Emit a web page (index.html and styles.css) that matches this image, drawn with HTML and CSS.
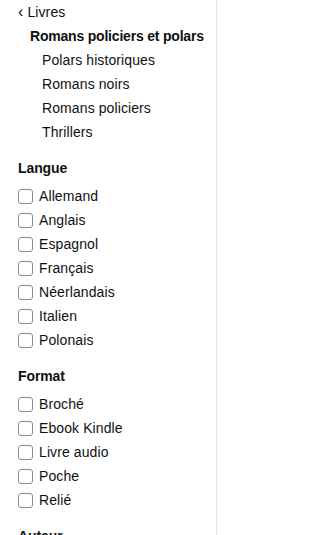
FILE: index.html
```html
<!DOCTYPE html>
<html lang="fr">
<head>
<meta charset="utf-8">
<link rel="stylesheet" href="styles.css">
</head>
<body>
<div class="sidebar">
  <ul class="cats">
    <li class="back"><span class="chev">&lsaquo;</span> Livres</li>
    <li class="current">Romans policiers et polars</li>
    <li class="sub">Polars historiques</li>
    <li class="sub">Romans noirs</li>
    <li class="sub">Romans policiers</li>
    <li class="sub">Thrillers</li>
  </ul>
  <div class="group">
    <div class="heading">Langue</div>
    <ul class="checks">
      <li><span class="box"></span>Allemand</li>
      <li><span class="box"></span>Anglais</li>
      <li><span class="box"></span>Espagnol</li>
      <li><span class="box"></span>Français</li>
      <li><span class="box"></span>Néerlandais</li>
      <li><span class="box"></span>Italien</li>
      <li><span class="box"></span>Polonais</li>
    </ul>
  </div>
  <div class="group">
    <div class="heading">Format</div>
    <ul class="checks">
      <li><span class="box"></span>Broché</li>
      <li><span class="box"></span>Ebook Kindle</li>
      <li><span class="box"></span>Livre audio</li>
      <li><span class="box"></span>Poche</li>
      <li><span class="box"></span>Relié</li>
    </ul>
  </div>
  <div class="group">
    <div class="heading">Auteur</div>
  </div>
</div>
</body>
</html>
```

FILE: styles.css
```css
html, body {
  margin: 0;
  padding: 0;
  background: #fff;
}
body {
  font-family: "Liberation Sans", Arial, sans-serif;
  font-size: 14px;
  color: #0f1111;
  letter-spacing: 0.1px;
}
.sidebar {
  width: 198px;
  height: 535px;
  padding-left: 18px;
  border-right: 1px solid #e3e3e3;
  overflow: hidden;
}
ul {
  list-style: none;
  margin: 0;
  padding: 0;
}
li {
  line-height: 24px;
  white-space: nowrap;
}
.chev {
  font-size: 16px;
}
.current {
  font-weight: bold;
  letter-spacing: -0.2px;
  padding-left: 12px;
}
.sub {
  padding-left: 24px;
}
.group {
  margin-top: 12px;
}
.heading {
  font-weight: bold;
  letter-spacing: -0.1px;
  line-height: 24px;
  margin-bottom: 4px;
}
.checks li {
  display: flex;
  align-items: center;
}
.box {
  box-sizing: border-box;
  width: 15px;
  height: 15px;
  border: 1px solid #888c8c;
  border-radius: 3px;
  margin-right: 6px;
  flex: none;
}
```
